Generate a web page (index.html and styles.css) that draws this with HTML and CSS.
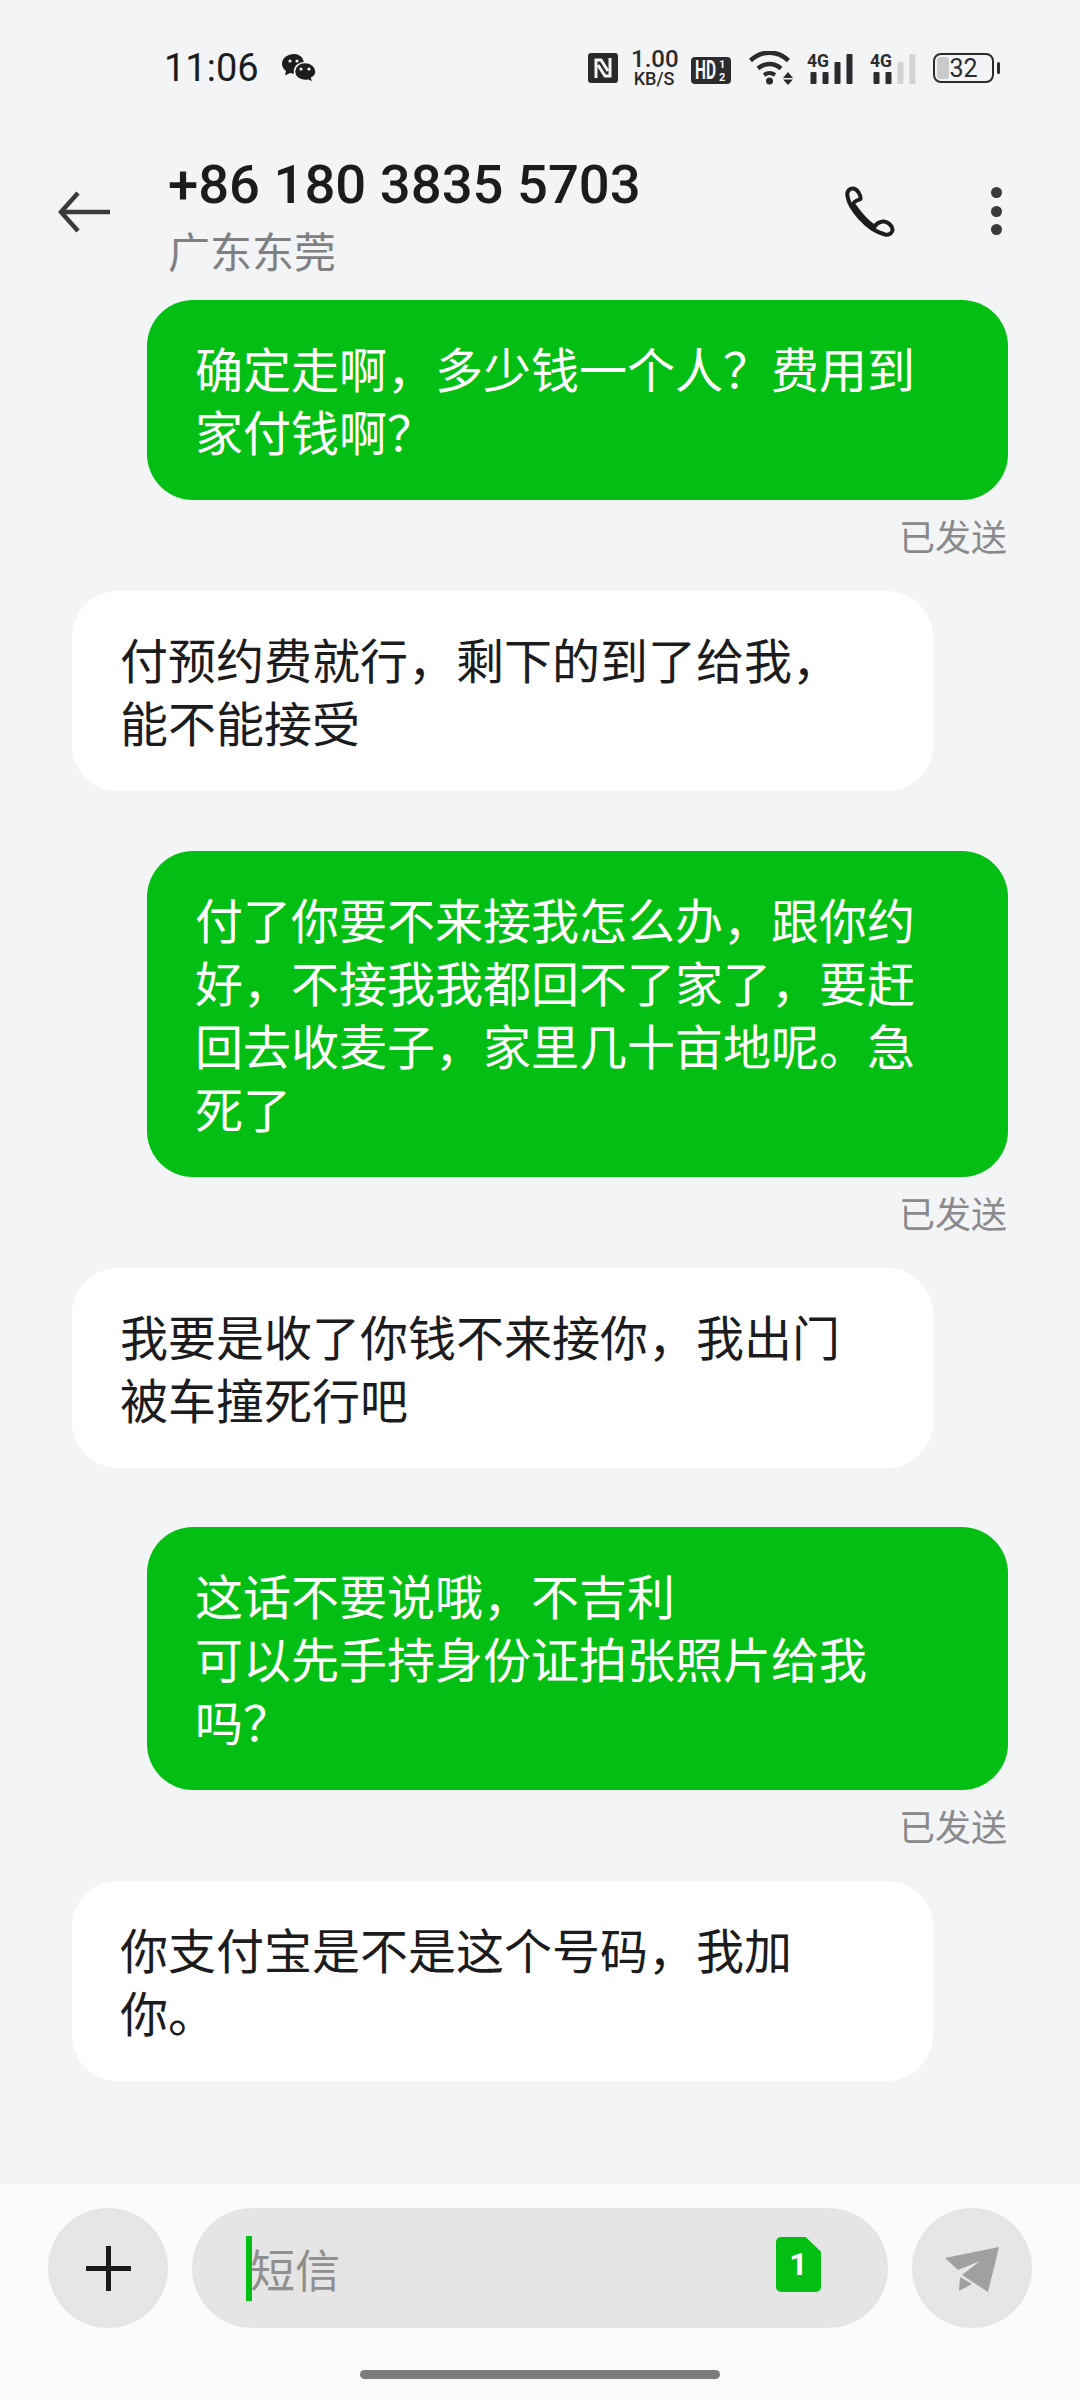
FILE: index.html
```html
<!DOCTYPE html>
<html>
<head>
<meta charset='utf-8'/>
<title>短信</title>
<link rel="stylesheet" href="styles.css">
</head>
<body>

<div id="status">
	<span id="time">11:06</span>
	<svg class="wechat" width="34" height="29" viewBox="0 0 34 29">
		<path d="M12 0C5.500 0 0 4.300 0 9.800c0 3 1.600 5.500 4 7.200L3 21.500l5-2.400c1.300.4 2.600.6 4 .6 5 0 10-3 10-9.900C22 4.300 18 0 12 0z"/>
		<path d="M23 8.500c-6 0-10.500 4-10.500 9 0 5 4.500 9 10.500 9 1 0 2-.1 3-.4L31 29l-1.300-5c2.600-1.500 4.300-3.800 4.300-6.500 0-5-4.800-9-11-9z" stroke="#f3f4f6" stroke-width="1.500"/>
		<circle cx="8" cy="7" r="1.600" fill="#f3f4f6"/><circle cx="15" cy="7" r="1.600" fill="#f3f4f6"/>
		<circle cx="19" cy="15" r="1.600" fill="#f3f4f6"/><circle cx="27" cy="15" r="1.600" fill="#f3f4f6"/>
	</svg>
	<div id="status-right">
		<svg class="nfc" width="30" height="30" viewBox="0 0 30 30">
			<rect width="30" height="30" rx="3" fill="#2b2b2e"/>
			<path d="M8 25V7H13L20 18" fill="none" stroke="#f3f4f6" stroke-width="3"/>
			<path d="M22 5V23H17L10 12" fill="none" stroke="#f3f4f6" stroke-width="3"/>
		</svg>
		<div class="speed"><div class="speed-num">1.00</div><div class="speed-unit">KB/S</div></div>
		<svg class="hd" width="40" height="32" viewBox="0 -5 40 32">
			<rect width="40" height="27" rx="4" fill="#2b2b2e"/>
			<text x="4" y="22" class="hd-text" textLength="21" lengthAdjust="spacingAndGlyphs">HD</text>
			<text x="28" y="11" class="hd-sub">1</text>
			<text x="28" y="24" class="hd-sub">2</text>
		</svg>
		<svg class="wifi" width="44" height="34" viewBox="0 0 44 34">
			<path d="M1.500 9.500C13 -1 28 -1 39.500 9.500" fill="none" stroke="#2b2b2e" stroke-width="4.500"/>
			<path d="M9 17.500c7-6 16-6 23 0" fill="none" stroke="#2b2b2e" stroke-width="4.500"/>
			<path d="M15 24c3.500-2.500 7.500-2.500 11 0" fill="none" stroke="#2b2b2e" stroke-width="4"/>
			<circle cx="20.500" cy="30" r="3.500" fill="#2b2b2e"/>
			<path d="M34 27l5-6 5 6zM34 28.500l5 5.500 5-5.500z" fill="#2b2b2e"/>
		</svg>
		<svg class="signal" width="46" height="38" viewBox="0 -5 46 38">
			<text x="0" y="13" class="sig-text" textLength="22" lengthAdjust="spacingAndGlyphs">4G</text>
			<rect x="3.500" y="18" width="6" height="12" rx="1" fill="#2b2b2e"/>
			<rect x="15.500" y="18" width="6" height="12" rx="1" fill="#2b2b2e"/>
			<rect x="27.500" y="8" width="6" height="22" rx="1" fill="#2b2b2e"/>
			<rect x="39.500" y="0" width="6" height="30" rx="1" fill="#2b2b2e"/>
		</svg>
		<svg class="signal" width="46" height="38" viewBox="0 -5 46 38">
			<text x="0" y="13" class="sig-text" textLength="22" lengthAdjust="spacingAndGlyphs">4G</text>
			<rect x="3.500" y="18" width="6" height="12" rx="1" fill="#2b2b2e"/>
			<rect x="15.500" y="18" width="6" height="12" rx="1" fill="#2b2b2e"/>
			<rect x="27.500" y="8" width="6" height="22" rx="1" fill="#d2d3d5"/>
			<rect x="39.500" y="0" width="6" height="30" rx="1" fill="#d2d3d5"/>
		</svg>
		<div class="battery"><div class="battery-fill"></div><span class="battery-num">32</span></div>
		<div class="battery-tip"></div>
	</div>
</div>

<div id="header">
	<svg class="back" width="54" height="42" viewBox="0 0 54 42">
		<path d="M53 21H4M21 2L4 21 21 40" fill="none" stroke="#3a3a3c" stroke-width="4.500"/>
	</svg>
	<div class="contact">
		<div class="number">+86 180 3835 5703</div>
		<div class="place">广东东莞</div>
	</div>
	<svg class="phone" width="52" height="52" viewBox="0 0 52 52">
		<path d="M9.500 20C6 16 13 14 15.500 13 16 9 12 2.500 8 2.500 4 2.500 1.500 6 2.500 10 4 22 22 44 40 48.500 45 49.500 48 46 47.500 43 47 39 42 35 38 35.500 34 36 31 38 29.500 41 22 36 15 28 9.500 20z" fill="none" stroke="#1d1d1f" stroke-width="4" stroke-linejoin="round"/>
	</svg>
	<div class="dots"><i></i><i></i><i></i></div>
</div>

<div id="list">
	<div class="msg out">
		<div class="bubble">确定走啊，多少钱一个人？费用到家付钱啊？</div>
		<div class="sent">已发送</div>
	</div>
	<div class="msg in">
		<div class="bubble">付预约费就行，剩下的到了给我，能不能接受</div>
	</div>
	<div class="msg out">
		<div class="bubble">付了你要不来接我怎么办，跟你约好，不接我我都回不了家了，要赶回去收麦子，家里几十亩地呢。急死了</div>
		<div class="sent">已发送</div>
	</div>
	<div class="msg in">
		<div class="bubble">我要是收了你钱不来接你，我出门被车撞死行吧</div>
	</div>
	<div class="msg out">
		<div class="bubble">这话不要说哦，不吉利<br>可以先手持身份证拍张照片给我吗？</div>
		<div class="sent">已发送</div>
	</div>
	<div class="msg in">
		<div class="bubble">你支付宝是不是这个号码，我加你。</div>
	</div>
</div>

<div id="bottom">
	<div class="inputrow">
		<div class="round">
			<svg width="45" height="45" viewBox="0 0 45 45"><path d="M0 22.500H45M22.500 0V45" stroke="#1a1a1a" stroke-width="5"/></svg>
		</div>
		<div class="input">
			<div class="caret"></div>
			<div class="hint">短信</div>
			<div class="sim">1</div>
		</div>
		<div class="round">
			<svg width="120" height="120" viewBox="0 0 120 120">
				<path d="M33 50L87 39 76 84 50 67 68 53 46 62z" fill="#a0a0a0"/>
				<path d="M48 69L47 83 60 76z" fill="#a0a0a0"/>
			</svg>
		</div>
	</div>
	<div class="homebar"></div>
</div>

</body>
</html>
```

FILE: styles.css
```css
body {
	margin: 0px;
	width: 1080px;
	height: 2400px;
	display: flex;
	flex-direction: column;
	background-color: #f3f4f6;
	font-family: "Roboto", "Noto Sans CJK SC", sans-serif;
	color: #1c1c1e;
	overflow: hidden;
}

/* status bar */
#status {
	height: 136px;
	flex: none;
	display: flex;
	align-items: center;
	padding-left: 164px;
	padding-right: 80px;
	color: #1d1d1f;
}
#time {
	font-size: 38px;
	width: 118px;
}
.wechat {
	fill: #1d1d1f;
}
#status-right {
	margin-left: auto;
	display: flex;
	align-items: center;
}
.nfc {
	margin-right: 13px;
}
.speed {
	width: 46px;
	margin-right: 14px;
	text-align: center;
	color: #2b2b2e;
}
.speed-num {
	font-size: 24px;
	line-height: 21px;
	font-weight: 500;
}
.speed-unit {
	margin-top: 1px;
	font-size: 18px;
	line-height: 16px;
	font-weight: 500;
	white-space: nowrap;
}
.hd {
	margin-right: 18px;
}
.hd-text {
	font-size: 25px;
	font-weight: 700;
	fill: #f3f4f6;
}
.hd-sub {
	font-size: 11px;
	font-weight: 700;
	fill: #f3f4f6;
}
.wifi {
	margin-right: 14px;
}
.signal {
	margin-right: 17px;
}
.sig-text {
	font-size: 18px;
	font-weight: 700;
	fill: #2b2b2e;
}
.battery {
	width: 61px;
	height: 30px;
	box-sizing: border-box;
	border: 2.5px solid #2b2b2e;
	border-radius: 8px;
	position: relative;
	display: flex;
	align-items: center;
	justify-content: center;
}
.battery-fill {
	position: absolute;
	left: 2px;
	top: 2px;
	bottom: 2px;
	width: 12px;
	background-color: #c8c9cb;
	border-radius: 3px;
}
.battery-num {
	position: relative;
	font-size: 25px;
	line-height: 25px;
	color: #2b2b2e;
}
.battery-tip {
	width: 3px;
	height: 12px;
	margin-left: 3px;
	background-color: #2b2b2e;
	border-radius: 2px;
}

/* title */
#header {
	height: 150px;
	flex: none;
	padding-top: 14px;
	padding-left: 57px;
	display: flex;
	align-items: flex-start;
}
.back {
	margin-top: 41px;
	margin-right: 57px;
}
.contact {
	width: 677px;
}
.number {
	height: 70px;
	line-height: 70px;
	font-size: 54.4px;
	font-weight: 500;
	white-space: nowrap;
	color: #1c1c1e;
}
.place {
	margin-top: 9px;
	font-size: 42px;
	line-height: 50px;
	color: #808082;
}
.phone {
	margin-top: 36px;
}
.dots {
	margin-top: 37px;
	margin-left: 94px;
	display: flex;
	flex-direction: column;
	gap: 7.5px;
}
.dots i {
	display: block;
	width: 11px;
	height: 11px;
	border-radius: 50%;
	background-color: #3a3a3c;
}

/* messages */
#list {
	flex: 1;
	display: flex;
	flex-direction: column;
}
.msg {
	display: flex;
	flex-direction: column;
	width: 861px;
}
.msg.in {
	margin-left: 72px;
	margin-bottom: 59.5px;
}
.msg.out {
	margin-left: 147px;
	margin-bottom: 30px;
}
.bubble {
	box-sizing: border-box;
	padding: 40px 49px 34px 48px;
	border-radius: 46px;
	font-size: 48px;
	line-height: 63px;
	background-color: #ffffff;
	color: #1c1c1e;
}
.out .bubble {
	background-color: #03bf13;
	color: #ffffff;
}
.sent {
	margin-top: 17px;
	margin-right: 1px;
	height: 44px;
	line-height: 44px;
	font-size: 36px;
	text-align: right;
	color: #8a8a8c;
}

/* input bar */
#bottom {
	height: 216px;
	flex: none;
	box-sizing: border-box;
	padding-top: 24px;
	background-color: #fbfbfb;
}
.inputrow {
	display: flex;
	gap: 24px;
	padding-left: 48px;
}
.round {
	width: 120px;
	height: 120px;
	border-radius: 50%;
	background-color: #e6e6e6;
	display: flex;
	align-items: center;
	justify-content: center;
}
.input {
	width: 696px;
	height: 120px;
	box-sizing: border-box;
	padding-left: 54px;
	padding-right: 67px;
	border-radius: 60px;
	background-color: #e5e5e5;
	display: flex;
	align-items: center;
}
.caret {
	width: 6px;
	height: 65px;
	background-color: #03bf13;
}
.hint {
	flex: 1;
	margin-left: -2px;
	font-size: 45px;
	color: #8f8f8f;
}
.sim {
	width: 45px;
	height: 55px;
	margin-top: -7px;
	background-color: #03bf13;
	border-radius: 5px;
	clip-path: polygon(0 0, 66% 0, 100% 27%, 100% 100%, 0 100%);
	color: #ffffff;
	font-size: 32px;
	font-weight: 700;
	text-align: center;
	line-height: 55px;
}
.homebar {
	width: 360px;
	height: 9px;
	margin: 42px auto 0;
	border-radius: 5px;
	background-color: #7b7b7b;
}
```
